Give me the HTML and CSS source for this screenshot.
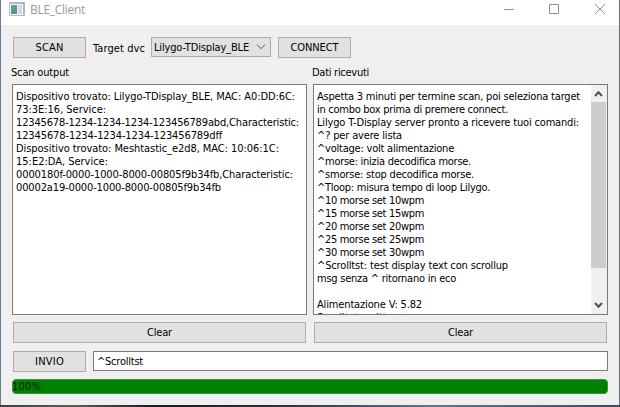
FILE: index.html
```html
<!DOCTYPE html>
<html lang="it">
<head>
<meta charset="utf-8">
<title>BLE_Client</title>
<link rel="stylesheet" href="styles.css">
</head>
<body>
<div class="window">
  <header class="titlebar">
    <svg class="app-icon" width="16" height="14" viewBox="0 0 16 14"><defs><linearGradient id="g" x2="1" y2="1"><stop stop-color="#6d9fb0"/><stop offset="1" stop-color="#4c9275"/></linearGradient></defs><path fill="#b5b9bd" d="M0 0h16v14H0z"/><path fill="#f4f6f8" d="M1 2h13v11H1z"/><path fill="url(#g)" d="M2 3h6v9H2z"/><path fill="#d5dade" d="M9 3h4v9H9z"/><path fill="#6e9c91" d="M13 1h1v1h-1z"/></svg>
    <span class="title"><span data-width="55">BLE_Client</span></span>
    <svg class="controls" width="102" height="12" viewBox="0 0 102 12" fill="none" stroke="#929292"><path d="M0 6.5h10M45.5 1.5h9v9h-9z"/><path d="M91 1l10 10M101 1L91 11"/></svg>
  </header>
  <main class="content">
    <div class="toolbar">
      <button class="button small"><span data-width="28">SCAN</span></button>
      <span class="target"><span data-width="52">Target dvc</span></span>
      <div class="combo"><span data-width="95">Lilygo-TDisplay_BLE</span><svg width="10" height="6" viewBox="0 0 10 6" fill="none" stroke="#555"><path d="M1 .7l4 4 4-4"/></svg></div>
      <button class="button small"><span data-width="48">CONNECT</span></button>
    </div>
    <div class="panels">
      <section class="panel">
        <div class="label"><span data-width="58">Scan output</span></div>
        <div class="text">
          <p><span data-width="279">Dispositivo trovato: Lilygo-TDisplay_BLE, MAC: A0:DD:6C:</span></p>
          <p><span data-width="90">73:3E:16, Service:</span></p>
          <p><span data-width="283">12345678-1234-1234-1234-123456789abd,Characteristic:</span></p>
          <p><span data-width="206">12345678-1234-1234-1234-123456789dff</span></p>
          <p><span data-width="263">Dispositivo trovato: Meshtastic_e2d8, MAC: 10:06:1C:</span></p>
          <p><span data-width="92">15:E2:DA, Service:</span></p>
          <p><span data-width="277">0000180f-0000-1000-8000-00805f9b34fb,Characteristic:</span></p>
          <p><span data-width="205">00002a19-0000-1000-8000-00805f9b34fb</span></p>
        </div>
        <button class="button wide"><span data-width="25">Clear</span></button>
      </section>
      <section class="panel">
        <div class="label"><span data-width="57">Dati ricevuti</span></div>
        <div class="text">
          <p><span data-width="263">Aspetta 3 minuti per termine scan, poi seleziona target</span></p>
          <p><span data-width="191">in combo box prima di premere connect.</span></p>
          <p><span data-width="262">Lilygo T-Display server pronto a ricevere tuoi comandi:</span></p>
          <p><span data-width="85">^? per avere lista</span></p>
          <p><span data-width="137">^voltage: volt alimentazione</span></p>
          <p><span data-width="154">^morse: inizia decodifica morse.</span></p>
          <p><span data-width="157">^smorse: stop decodifica morse.</span></p>
          <p><span data-width="173">^Tloop: misura tempo di loop Lilygo.</span></p>
          <p><span data-width="107">^10 morse set 10wpm</span></p>
          <p><span data-width="107">^15 morse set 15wpm</span></p>
          <p><span data-width="107">^20 morse set 20wpm</span></p>
          <p><span data-width="107">^25 morse set 25wpm</span></p>
          <p><span data-width="107">^30 morse set 30wpm</span></p>
          <p><span data-width="191">^Scrolltst: test display text con scrollup</span></p>
          <p><span data-width="139">msg senza ^ ritornano in eco</span></p>
          <p></p>
          <p><span data-width="105">Alimentazione V: 5.82</span></p>
          <p><span data-width="76">Scrolltst scritto</span></p>
          <div class="scrollbar">
            <svg width="15" height="17" viewBox="0 0 15 17" fill="none" stroke="#505050" stroke-width="2"><path d="M4 11l3.5-3.7L11 11"/></svg>
            <div class="thumb"></div>
            <svg width="15" height="17" viewBox="0 0 15 17" fill="none" stroke="#505050" stroke-width="2"><path d="M4 6l3.5 3.7L11 6"/></svg>
          </div>
        </div>
        <button class="button wide"><span data-width="25">Clear</span></button>
      </section>
    </div>
    <div class="send">
      <button class="button small"><span data-width="29">INVIO</span></button>
      <div class="input"><span data-width="46">^Scrolltst</span></div>
    </div>
    <div class="progress"><span data-width="29">100%</span></div>
  </main>
</div>
<script src="fit.js"></script>
</body>
</html>
```
FILE: styles.css
```css
* { box-sizing: border-box; }
body {
  margin: 0;
  width: 620px;
  height: 407px;
  overflow: hidden;
  background: linear-gradient(90deg, #39424d, #5f5b57 12%, #171c25 25%, #27313e 45%, #60778c 70%, #3c4c5e);
  font: 11px/13px "DejaVu Sans Condensed", "DejaVu Sans", sans-serif;
  font-stretch: condensed;
  color: #000;
}
.window {
  width: 620px;
  height: 405px;
  background: #efefef;
  border-left: 1px solid #6d7c8c;
  border-right: 1px solid #66717a;
}
.titlebar {
  height: 25px;
  padding: 0 13px 7px 8px;
  background: #fff;
  display: flex;
  align-items: center;
}
.title { margin: 1px 0 0 5px; color: #999; font: 12px/14px "Open Sans", sans-serif; }
.controls { margin-left: auto; }
.content { padding: 12px 11px 0 11px; }
.toolbar { display: flex; height: 21px; padding-left: 1px; }
.button {
  height: 21px;
  padding: 0 0 1px;
  border: 1px solid #adadad;
  background: #e1e1e1;
  font: inherit;
  color: inherit;
  text-align: center;
}
.small { width: 73px; flex: none; }
.target { width: 65px; padding: 5px 0 0 7px; }
.combo {
  width: 120px;
  height: 20px;
  margin-right: 7px;
  padding: 0 4px 0 2px;
  border: 1px solid #adadad;
  background: #e1e1e1;
  display: flex;
  align-items: center;
  justify-content: space-between;
}
.panels { display: grid; grid-template-columns: 295px 295px; column-gap: 6px; }
.panel { display: flex; flex-direction: column; }
.label { height: 26px; padding-top: 8px; margin-left: -1px; }
.text {
  position: relative;
  height: 231px;
  padding: 5px 3px;
  border: 1px solid #7a7a7a;
  background: #fff;
  overflow: hidden;
}
.text p { margin: 0; height: 13px; }
.scrollbar {
  position: absolute;
  inset: 0 0 0 auto;
  width: 16px;
  padding-right: 1px;
  background: #f0f0f0;
}
.scrollbar svg { display: block; }
.thumb { height: 166px; background: #cdcdcd; margin-bottom: 29px; }
.wide { margin: 7px 1px 0; }
.send { display: flex; margin-top: 8px; padding-left: 1px; gap: 7px; }
.input {
  flex: 1;
  height: 20px;
  padding: 3px;
  border: 1px solid #7a7a7a;
  background: #fff;
}
.progress {
  height: 15px;
  margin-top: 7px;
  border: 1px solid #3e923e;
  border-radius: 4px;
  background: #008000;
  color: #001c00;
}
.progress span { margin-left: -1px; }
[data-width] { white-space: pre; }
```
FILE: fit.js
```js
// Spread each text run over its nominal width.
document.querySelectorAll('[data-width]').forEach(function (el) {
  var natural = el.getBoundingClientRect().width;
  var delta = (Number(el.dataset.width) - natural) / el.textContent.length;
  el.style.letterSpacing = delta + 'px';
});
```
